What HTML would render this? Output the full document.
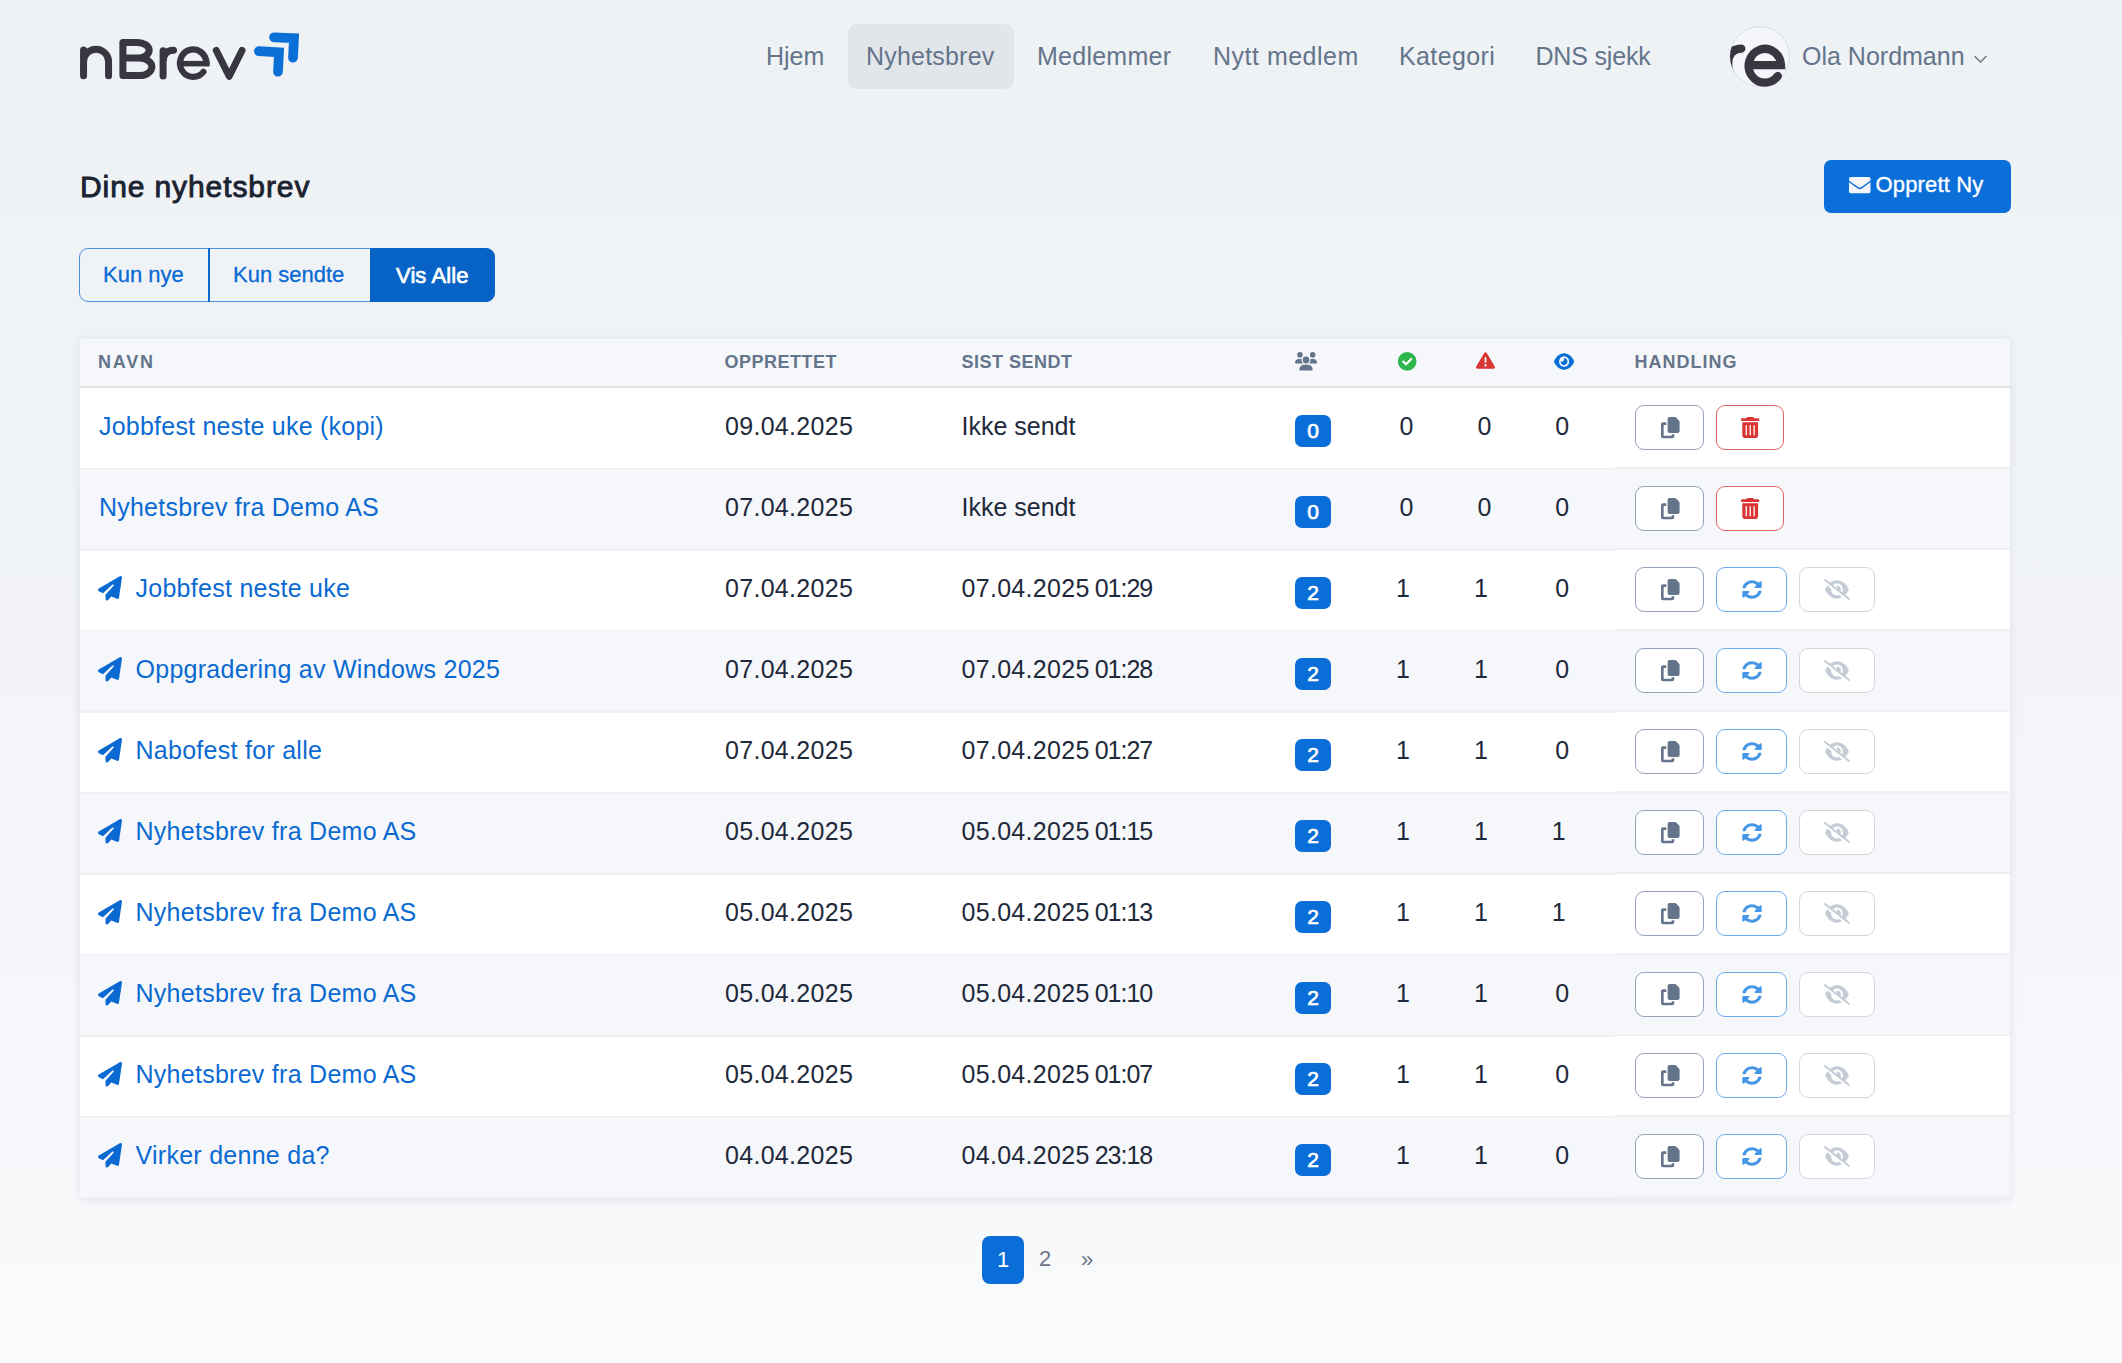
<!DOCTYPE html><html><head><meta charset="utf-8"><style>
html,body{margin:0;padding:0}
body{width:2122px;height:1363px;position:relative;overflow:hidden;background:linear-gradient(180deg,#eef2f5 0%,#f2f4f7 50%,#f9fafc 100%);font-family:"Liberation Sans",sans-serif}
.t{position:absolute;white-space:nowrap}
.b{position:absolute;box-sizing:border-box}
.ic{position:absolute;overflow:visible}
</style></head><body>
<svg style="position:absolute;left:0;top:0" width="320" height="100" viewBox="0 0 320 100">
<g fill="none" stroke="#373641" stroke-width="7" stroke-linecap="round">
<path d="M83.55,75.75 V50 M83.55,61.7 A12.5,12.5 0 0 1 108.55,61.7 V75.75"/>
<path d="M122.9,75.6 V42.5 H137.4 A11.75,7.8 0 0 1 137.4,58.1 H122.9 M137.4,58.1 H139.3 A12.6,8.75 0 0 1 139.3,75.6 H122.9 V42.5" stroke-linejoin="round"/>
<path d="M163.1,75.9 V50.7 M163.1,62 C163.1,54 167,50.3 173.5,50.3"/>
<path d="M206.4,63.05 A13.2,13.7 0 1 0 203.4,71.9" stroke-width="6.3"/>
<rect x="181" y="60.9" width="28.6" height="5.5" fill="#373641" stroke="none"/>
<path d="M216.3,50.5 L229.2,76.3 L242,50.5" stroke-linejoin="round"/>
</g>
<g fill="none" stroke="#0b6fd8" stroke-width="9.7" stroke-linecap="round" stroke-linejoin="miter"><path d="M274,37.3 L294,38.2 L293,57.7"/><path d="M258.9,51.2 L279,52.3 L278,71.7"/></g>
</svg>
<div class="b" style="left:848px;top:24px;width:166px;height:65px;background:#e2e6ea;border-radius:9px"></div>
<div class="t" style="left:766px;top:44.06px;font-size:25px;line-height:25px;color:#64748b;font-weight:400">Hjem</div>
<div class="t" style="left:866px;top:44.06px;font-size:25px;line-height:25px;color:#64748b;font-weight:400;letter-spacing:0.2px">Nyhetsbrev</div>
<div class="t" style="left:1037px;top:44.06px;font-size:25px;line-height:25px;color:#64748b;font-weight:400;letter-spacing:0.25px">Medlemmer</div>
<div class="t" style="left:1213px;top:44.06px;font-size:25px;line-height:25px;color:#64748b;font-weight:400;letter-spacing:0.5px">Nytt medlem</div>
<div class="t" style="left:1399px;top:44.06px;font-size:25px;line-height:25px;color:#64748b;font-weight:400;letter-spacing:0.38px">Kategori</div>
<div class="t" style="left:1535.5px;top:44.06px;font-size:25px;line-height:25px;color:#64748b;font-weight:400;letter-spacing:-0.18px">DNS sjekk</div>
<svg style="position:absolute;left:1720px;top:17px" width="80" height="80" viewBox="1720 17 80 80">
<defs><clipPath id="av"><circle cx="1759.8" cy="56.4" r="29.8"/></clipPath></defs>
<circle cx="1759.8" cy="56.4" r="29.8" fill="#f5f6fa" stroke="#d8dce4" stroke-width="1"/>
<g clip-path="url(#av)"><g transform="translate(1766,64.6) scale(1.25) translate(-193.25,-63.05)" fill="none" stroke="#373641" stroke-width="6.6" stroke-linecap="round"><path d="M163.1,75.9 V50.7 M163.1,62 C163.1,54 167,50.3 173.5,50.3"/></g></g>
<g transform="translate(1764.85,64.3) scale(1.25) translate(-193.25,-63.05)" fill="none" stroke="#373641" stroke-width="6.6" stroke-linecap="round"><path d="M180.3,63.7 H206.2 A12.95,13.55 0 1 0 203.6,72.4"/></g>
</svg>
<div class="t" style="left:1802px;top:44.06px;font-size:25px;line-height:25px;color:#64748b;font-weight:400">Ola Nordmann</div>
<svg class="ic" style="left:1973px;top:54px;width:15px;height:10px" viewBox="0 0 15 10"><path d="M1.5,2 L7.5,8 L13.5,2" fill="none" stroke="#6b7685" stroke-width="1.4"/></svg>
<div class="t" style="left:80px;top:171.97px;font-size:30px;line-height:30px;color:#1b2230;font-weight:400;letter-spacing:0.9px;-webkit-text-stroke:0.9px #1b2230">Dine nyhetsbrev</div>
<div class="b" style="left:1824px;top:160px;width:187px;height:53px;background:#0a6fd8;border-radius:7px"></div>
<svg class="ic" style="left:1849px;top:177.4px;width:21.5px;height:16.3px" viewBox="0 64 512 384" preserveAspectRatio="none"><path fill="#f4f6fb" d="M502.3 190.8c3.9-3.1 9.7-.2 9.7 4.7V400c0 26.5-21.5 48-48 48H48c-26.5 0-48-21.5-48-48V195.6c0-5 5.7-7.8 9.7-4.7 22.4 17.4 52.1 39.5 154.1 113.6 21.1 15.4 56.7 47.8 92.2 47.6 35.7.3 72-32.8 92.3-47.6 102-74.1 131.6-96.3 154-113.7zM256 320c23.2.4 56.6-29.2 73.4-41.4 132.7-96.3 142.8-104.7 173.4-128.7 5.8-4.5 9.2-11.5 9.2-18.9v-19c0-26.5-21.5-48-48-48H48C21.5 64 0 85.5 0 112v19c0 7.4 3.4 14.3 9.2 18.9 30.6 23.9 40.7 32.4 173.4 128.7 16.8 12.2 50.2 41.8 73.4 41.4z"/></svg>
<div class="t" style="left:1875.5px;top:174.22px;font-size:22px;line-height:22px;color:#ffffff;font-weight:400;letter-spacing:0.15px;-webkit-text-stroke:0.35px #ffffff">Opprett Ny</div>
<div class="b" style="left:79px;top:248px;width:416px;height:54px;border:1.7px solid #4b92e3;border-radius:9px"></div>
<div class="b" style="left:370px;top:248px;width:125px;height:54px;background:#0863c6;border-radius:0 9px 9px 0"></div>
<div class="b" style="left:208px;top:248px;width:2px;height:54px;background:#0a6ad4"></div>
<div class="t" style="left:103px;top:264.42px;font-size:22px;line-height:22px;color:#0a6ad4;font-weight:400;-webkit-text-stroke:0.3px #0a6ad4">Kun nye</div>
<div class="t" style="left:233px;top:264.42px;font-size:22px;line-height:22px;color:#0a6ad4;font-weight:400;-webkit-text-stroke:0.3px #0a6ad4">Kun sendte</div>
<div class="t" style="left:396px;top:264.92px;font-size:22px;line-height:22px;color:#ffffff;font-weight:400;letter-spacing:0.1px;-webkit-text-stroke:0.7px #ffffff">Vis Alle</div>
<div class="b" style="left:80px;top:339px;width:1930px;height:859px;background:#fff;box-shadow:0 2px 9px rgba(30,40,60,0.10)"></div>
<div class="b" style="left:80px;top:339px;width:1930px;height:47px;background:#f6f7fa"></div>
<div class="b" style="left:80px;top:386px;width:1930px;height:2px;background:#dfe3e8"></div>
<div class="t" style="left:98px;top:353.38px;font-size:18px;line-height:18px;color:#64748b;font-weight:700;letter-spacing:1.8px">NAVN</div>
<div class="t" style="left:724.5px;top:353.38px;font-size:18px;line-height:18px;color:#64748b;font-weight:700;letter-spacing:0.5px">OPPRETTET</div>
<div class="t" style="left:961.5px;top:353.38px;font-size:18px;line-height:18px;color:#64748b;font-weight:700;letter-spacing:0.5px">SIST SENDT</div>
<div class="t" style="left:1634.5px;top:353.38px;font-size:18px;line-height:18px;color:#64748b;font-weight:700;letter-spacing:1.0px">HANDLING</div>
<svg class="ic" style="left:1295.2px;top:352.2px;width:22.1px;height:18.4px" viewBox="0 0 640 512" preserveAspectRatio="none"><path fill="#64748b" d="M144 0a80 80 0 1 1 0 160A80 80 0 1 1 144 0zM512 0a80 80 0 1 1 0 160A80 80 0 1 1 512 0zM0 298.7C0 239.8 47.8 192 106.7 192h42.7c15.9 0 31 3.5 44.6 9.7c-1.3 7.2-1.9 14.7-1.900 22.3c0 38.200 16.800 72.500 43.300 96c-.2 0-.4 0-.7 0H21.3C9.6 320 0 310.4 0 298.7zM405.3 320c-.2 0-.4 0-.7 0c26.6-23.5 43.3-57.8 43.3-96c0-7.6-.7-15-1.9-22.3c13.6-6.3 28.7-9.7 44.6-9.7h42.7C592.2 192 640 239.8 640 298.7c0 11.8-9.6 21.3-21.3 21.3H405.3zM224 224a96 96 0 1 1 192 0 96 96 0 1 1 -192 0zM128 485.3C128 411.7 187.7 352 261.3 352H378.7C452.3 352 512 411.7 512 485.3c0 14.7-11.9 26.7-26.7 26.7H154.7c-14.7 0-26.7-11.9-26.7-26.7z"/></svg>
<svg class="ic" style="left:1397px;top:351px;width:21px;height:21px" viewBox="0 0 21 21"><circle cx="10.2" cy="10.4" r="9.3" fill="#2eb54b"/><path d="M6.2,10.6 L9,13.3 L14.2,7.9" fill="none" stroke="#fff" stroke-width="2.2" stroke-linecap="round" stroke-linejoin="round"/></svg>
<svg class="ic" style="left:1475.5px;top:351px;width:19px;height:19px" viewBox="0 0 512 512" preserveAspectRatio="none"><path fill="#d93636" d="M256 32c14.2 0 27.3 7.5 34.5 19.8l216 368c7.3 12.4 7.3 27.7 .2 40.1S486.3 480 472 480H40c-14.3 0-27.6-7.7-34.7-20.1s-7-27.8 .2-40.1l216-368C228.7 39.5 241.8 32 256 32zm0 128c-13.3 0-24 10.7-24 24V296c0 13.3 10.7 24 24 24s24-10.7 24-24V184c0-13.3-10.7-24-24-24zm32 224a32 32 0 1 0 -64 0 32 32 0 1 0 64 0z"/></svg>
<svg class="ic" style="left:1554.2px;top:352px;width:20.2px;height:19px" viewBox="0 0 576 512" preserveAspectRatio="none"><path fill="#0a6ed8" d="M288 32c-80.8 0-145.5 36.8-192.6 80.6C48.6 156 17.3 208 2.5 243.7c-3.3 7.9-3.3 16.7 0 24.6C17.3 304 48.6 356 95.4 399.4C142.5 443.2 207.2 480 288 480s145.5-36.8 192.6-80.6c46.8-43.5 78.1-95.4 93-131.1c3.3-7.900 3.3-16.700 0-24.6c-14.9-35.7-46.2-87.7-93-131.1C433.5 68.8 368.8 32 288 32zM144 256a144 144 0 1 1 288 0 144 144 0 1 1 -288 0zm144-64c0 35.3-28.7 64-64 64c-7.1 0-13.9-1.2-20.3-3.3c-5.5-1.8-11.9 1.6-11.7 7.4c.3 6.9 1.3 13.8 3.2 20.7c13.7 51.2 66.4 81.6 117.6 67.9s81.6-66.4 67.9-117.6c-11.1-41.5-47.8-69.4-88.6-71.1c-5.8-.2-9.2 6.1-7.4 11.7c2.1 6.4 3.3 13.2 3.3 20.3z"/></svg>
<div class="b" style="left:80px;top:468px;width:1535px;height:2px;background:#eef0f3"></div>
<div class="b" style="left:1615px;top:467px;width:395px;height:2px;background:#eef0f3"></div>
<div class="t" style="left:99px;top:414.26px;font-size:25px;line-height:25px;color:#0a6ad2;font-weight:400;letter-spacing:0.22px">Jobbfest neste uke (kopi)</div>
<div class="t" style="left:725px;top:414.26px;font-size:25px;line-height:25px;color:#1e293b;font-weight:400;letter-spacing:0.3px">09.04.2025</div>
<div class="t" style="left:961.5px;top:414.26px;font-size:25px;line-height:25px;color:#1e293b;font-weight:400">Ikke sendt</div>
<div class="b" style="left:1295px;top:414.6px;width:36px;height:32px;background:#0a6ed8;border-radius:7px"></div>
<div class="t" style="left:1295px;top:414.6px;width:36px;height:32px;line-height:32px;text-align:center;font-size:21px;font-weight:400;-webkit-text-stroke:0.7px #fff;color:#fff">0</div>
<div class="t" style="left:1399.5px;top:414.26px;font-size:25px;line-height:25px;color:#1e293b;font-weight:400">0</div>
<div class="t" style="left:1477.5px;top:414.26px;font-size:25px;line-height:25px;color:#1e293b;font-weight:400">0</div>
<div class="t" style="left:1555.3px;top:414.26px;font-size:25px;line-height:25px;color:#1e293b;font-weight:400">0</div>
<div class="b" style="left:1635px;top:405.2px;width:69px;height:45px;border:1.5px solid #94a3b8;border-radius:9px;background:#fff"></div>
<svg class="ic" style="left:1660.5px;top:417.0px;width:18.6px;height:21.3px" viewBox="0 0 448 512" preserveAspectRatio="none"><path fill="#64748b" d="M208 0H332.1c12.7 0 24.9 5.1 33.9 14.1l67.9 67.9c9 9 14.1 21.2 14.1 33.9V336c0 26.5-21.5 48-48 48H208c-26.5 0-48-21.5-48-48V48c0-26.5 21.5-48 48-48zM48 128h80v64H64V448H256V416h64v48c0 26.5-21.5 48-48 48H48c-26.5 0-48-21.5-48-48V176c0-26.5 21.5-48 48-48z"/></svg>
<div class="b" style="left:1716px;top:405.2px;width:68px;height:45px;border:1.5px solid #e06666;border-radius:9px;background:#fff"></div>
<svg class="ic" style="left:1741px;top:417.0px;width:18.4px;height:21px" viewBox="0 0 448 512" preserveAspectRatio="none"><path fill="#d93333" d="M135.2 17.7C140.6 6.8 151.7 0 163.8 0H284.2c12.1 0 23.2 6.8 28.6 17.7L320 32h96c17.7 0 32 14.3 32 32s-14.3 32-32 32H32C14.3 96 0 81.7 0 64S14.3 32 32 32h96l7.2-14.3zM32 128H416V448c0 35.3-28.7 64-64 64H96c-35.3 0-64-28.7-64-64V128zm96 64c-8.8 0-16 7.2-16 16V432c0 8.8 7.2 16 16 16s16-7.2 16-16V208c0-8.8-7.2-16-16-16zm96 0c-8.8 0-16 7.2-16 16V432c0 8.8 7.2 16 16 16s16-7.2 16-16V208c0-8.8-7.2-16-16-16zm96 0c-8.8 0-16 7.2-16 16V432c0 8.8 7.2 16 16 16s16-7.2 16-16V208c0-8.8-7.2-16-16-16z"/></svg>
<div class="b" style="left:80px;top:469px;width:1930px;height:80px;background:#f6f7fa"></div>
<div class="b" style="left:80px;top:549px;width:1535px;height:2px;background:#eef0f3"></div>
<div class="b" style="left:1615px;top:548px;width:395px;height:2px;background:#eef0f3"></div>
<div class="t" style="left:99px;top:495.26px;font-size:25px;line-height:25px;color:#0a6ad2;font-weight:400;letter-spacing:0.22px">Nyhetsbrev fra Demo AS</div>
<div class="t" style="left:725px;top:495.26px;font-size:25px;line-height:25px;color:#1e293b;font-weight:400;letter-spacing:0.3px">07.04.2025</div>
<div class="t" style="left:961.5px;top:495.26px;font-size:25px;line-height:25px;color:#1e293b;font-weight:400">Ikke sendt</div>
<div class="b" style="left:1295px;top:495.6px;width:36px;height:32px;background:#0a6ed8;border-radius:7px"></div>
<div class="t" style="left:1295px;top:495.6px;width:36px;height:32px;line-height:32px;text-align:center;font-size:21px;font-weight:400;-webkit-text-stroke:0.7px #fff;color:#fff">0</div>
<div class="t" style="left:1399.5px;top:495.26px;font-size:25px;line-height:25px;color:#1e293b;font-weight:400">0</div>
<div class="t" style="left:1477.5px;top:495.26px;font-size:25px;line-height:25px;color:#1e293b;font-weight:400">0</div>
<div class="t" style="left:1555.3px;top:495.26px;font-size:25px;line-height:25px;color:#1e293b;font-weight:400">0</div>
<div class="b" style="left:1635px;top:486.2px;width:69px;height:45px;border:1.5px solid #94a3b8;border-radius:9px;background:#fff"></div>
<svg class="ic" style="left:1660.5px;top:498.0px;width:18.6px;height:21.3px" viewBox="0 0 448 512" preserveAspectRatio="none"><path fill="#64748b" d="M208 0H332.1c12.7 0 24.9 5.1 33.9 14.1l67.9 67.9c9 9 14.1 21.2 14.1 33.9V336c0 26.5-21.5 48-48 48H208c-26.5 0-48-21.5-48-48V48c0-26.5 21.5-48 48-48zM48 128h80v64H64V448H256V416h64v48c0 26.5-21.5 48-48 48H48c-26.5 0-48-21.5-48-48V176c0-26.5 21.5-48 48-48z"/></svg>
<div class="b" style="left:1716px;top:486.2px;width:68px;height:45px;border:1.5px solid #e06666;border-radius:9px;background:#fff"></div>
<svg class="ic" style="left:1741px;top:498.0px;width:18.4px;height:21px" viewBox="0 0 448 512" preserveAspectRatio="none"><path fill="#d93333" d="M135.2 17.7C140.6 6.8 151.7 0 163.8 0H284.2c12.1 0 23.2 6.8 28.6 17.7L320 32h96c17.7 0 32 14.3 32 32s-14.3 32-32 32H32C14.3 96 0 81.7 0 64S14.3 32 32 32h96l7.2-14.3zM32 128H416V448c0 35.3-28.7 64-64 64H96c-35.3 0-64-28.7-64-64V128zm96 64c-8.8 0-16 7.2-16 16V432c0 8.8 7.2 16 16 16s16-7.2 16-16V208c0-8.8-7.2-16-16-16zm96 0c-8.8 0-16 7.2-16 16V432c0 8.8 7.2 16 16 16s16-7.2 16-16V208c0-8.8-7.2-16-16-16zm96 0c-8.8 0-16 7.2-16 16V432c0 8.8 7.2 16 16 16s16-7.2 16-16V208c0-8.8-7.2-16-16-16z"/></svg>
<div class="b" style="left:80px;top:630px;width:1535px;height:2px;background:#eef0f3"></div>
<div class="b" style="left:1615px;top:629px;width:395px;height:2px;background:#eef0f3"></div>
<svg class="ic" style="left:98px;top:576.3px;width:24px;height:24.5px" viewBox="0 0 512 512" preserveAspectRatio="none"><path fill="#0a6ad2" d="M498.1 5.6c10.1 7 15.4 19.1 13.5 31.2l-64 416c-1.5 9.7-7.4 18.2-16 23s-18.9 5.4-28 1.6L284 427.7l-68.5 74.1c-8.9 9.7-22.9 12.9-35.2 8.1S160 493.2 160 480V396.4c0-4 1.5-7.8 4.2-10.7L331.8 202.8c5.8-6.3 5.6-16-.4-22s-15.7-6.4-22-.7L106 360.8 17.7 316.6C7.1 311.3 .3 300.7 0 288.9s5.9-22.8 16.1-28.7l448-256c10.7-6.1 23.9-5.5 34 1.4z"/></svg>
<div class="t" style="left:135.5px;top:576.26px;font-size:25px;line-height:25px;color:#0a6ad2;font-weight:400;letter-spacing:0.27px">Jobbfest neste uke</div>
<div class="t" style="left:725px;top:576.26px;font-size:25px;line-height:25px;color:#1e293b;font-weight:400;letter-spacing:0.3px">07.04.2025</div>
<div class="t" style="left:961.5px;top:576.26px;font-size:25px;line-height:25px;color:#1e293b;font-weight:400"><span style="letter-spacing:0.3px">07.04.2025</span><span style="letter-spacing:-1px;margin-left:5px">01:29</span></div>
<div class="b" style="left:1295px;top:576.6px;width:36px;height:32px;background:#0a6ed8;border-radius:7px"></div>
<div class="t" style="left:1295px;top:576.6px;width:36px;height:32px;line-height:32px;text-align:center;font-size:21px;font-weight:400;-webkit-text-stroke:0.7px #fff;color:#fff">2</div>
<div class="t" style="left:1396.0px;top:576.26px;font-size:25px;line-height:25px;color:#1e293b;font-weight:400">1</div>
<div class="t" style="left:1474.0px;top:576.26px;font-size:25px;line-height:25px;color:#1e293b;font-weight:400">1</div>
<div class="t" style="left:1555.3px;top:576.26px;font-size:25px;line-height:25px;color:#1e293b;font-weight:400">0</div>
<div class="b" style="left:1635px;top:567.2px;width:69px;height:45px;border:1.5px solid #94a3b8;border-radius:9px;background:#fff"></div>
<svg class="ic" style="left:1660.5px;top:579.0px;width:18.6px;height:21.3px" viewBox="0 0 448 512" preserveAspectRatio="none"><path fill="#64748b" d="M208 0H332.1c12.7 0 24.9 5.1 33.9 14.1l67.9 67.9c9 9 14.1 21.2 14.1 33.9V336c0 26.5-21.5 48-48 48H208c-26.5 0-48-21.5-48-48V48c0-26.5 21.5-48 48-48zM48 128h80v64H64V448H256V416h64v48c0 26.5-21.5 48-48 48H48c-26.5 0-48-21.5-48-48V176c0-26.5 21.5-48 48-48z"/></svg>
<div class="b" style="left:1716px;top:567.2px;width:71px;height:45px;border:1.5px solid #6eabeb;border-radius:9px;background:#fff"></div>
<svg class="ic" style="left:1742px;top:580.0px;width:20px;height:19px" viewBox="0 0 512 512" preserveAspectRatio="none"><path fill="#4596e5" d="M370.72 133.28C339.458 104.008 298.888 87.962 255.848 88c-77.458.068-144.328 53.178-162.791 126.85-1.344 5.363-6.122 9.15-11.651 9.15H24.103c-7.498 0-13.194-6.807-11.807-14.176C33.933 94.924 134.813 8 256 8c66.448 0 126.791 26.136 171.315 68.685L463.03 40.97C478.149 25.851 504 36.559 504 57.941V192c0 13.255-10.745 24-24 24H345.941c-21.382 0-32.09-25.851-16.971-40.971l41.75-41.749zM32 296h134.059c21.382 0 32.09 25.851 16.971 40.971l-41.75 41.75c31.262 29.273 71.835 45.319 114.876 45.28 77.418-.07 144.315-53.144 162.787-126.849 1.344-5.363 6.122-9.15 11.651-9.15h57.304c7.498 0 13.194 6.807 11.807 14.176C478.067 417.076 377.187 504 256 504c-66.448 0-126.791-26.136-171.315-68.685L48.97 471.03C33.851 486.149 8 475.441 8 454.059V320c0-13.255 10.745-24 24-24z"/></svg>
<div class="b" style="left:1799px;top:567.2px;width:76px;height:45px;border:1.5px solid #d2d7de;border-radius:9px;background:#fff"></div>
<svg class="ic" style="left:1824px;top:578.5px;width:26px;height:21px" viewBox="0 0 640 512" preserveAspectRatio="none"><path fill="#c5ccd6" d="M38.8 5.1C28.4-3.1 13.3-1.2 5.1 9.2S-1.2 34.7 9.2 42.9l592 464c10.4 8.2 25.5 6.3 33.7-4.1s6.3-25.5-4.1-33.7L525.6 386.7c39.6-40.6 66.4-86.1 79.9-118.4c3.3-7.9 3.3-16.7 0-24.6c-14.9-35.7-46.2-87.7-93-131.1C465.5 68.8 400.8 32 320 32c-68.2 0-125 26.3-169.3 60.8L38.8 5.1zM223.1 149.5C248.6 126.2 282.7 112 320 112c79.5 0 144 64.5 144 144c0 24.9-6.3 48.3-17.4 68.7L408 294.5c8.4-19.3 10.6-41.4 4.8-63.3c-11.1-41.5-47.8-69.4-88.6-71.1c-5.8-.2-9.2 6.1-7.4 11.700c2.1 6.4 3.3 13.2 3.3 20.3c0 10.2-2.4 19.8-6.6 28.3l-90.3-70.8zM373 389.9c-16.4 6.5-34.3 10.1-53 10.1c-79.5 0-144-64.5-144-144c0-6.9 .5-13.6 1.4-20.2L83.1 161.5C60.3 191.2 44 220.8 34.5 243.7c-3.3 7.9-3.3 16.7 0 24.6c14.9 35.7 46.2 87.7 93 131.1C174.5 443.2 239.2 480 320 480c47.8 0 89.9-12.9 126.2-32.5L373 389.9z"/></svg>
<div class="b" style="left:80px;top:631px;width:1930px;height:80px;background:#f6f7fa"></div>
<div class="b" style="left:80px;top:711px;width:1535px;height:2px;background:#eef0f3"></div>
<div class="b" style="left:1615px;top:710px;width:395px;height:2px;background:#eef0f3"></div>
<svg class="ic" style="left:98px;top:657.3px;width:24px;height:24.5px" viewBox="0 0 512 512" preserveAspectRatio="none"><path fill="#0a6ad2" d="M498.1 5.6c10.1 7 15.4 19.1 13.5 31.2l-64 416c-1.5 9.7-7.4 18.2-16 23s-18.9 5.4-28 1.6L284 427.7l-68.5 74.1c-8.9 9.7-22.9 12.9-35.2 8.1S160 493.2 160 480V396.4c0-4 1.5-7.8 4.2-10.7L331.8 202.8c5.8-6.3 5.6-16-.4-22s-15.7-6.4-22-.7L106 360.8 17.7 316.6C7.1 311.3 .3 300.7 0 288.9s5.9-22.8 16.1-28.7l448-256c10.7-6.1 23.9-5.5 34 1.4z"/></svg>
<div class="t" style="left:135.5px;top:657.26px;font-size:25px;line-height:25px;color:#0a6ad2;font-weight:400;letter-spacing:0.27px">Oppgradering av Windows 2025</div>
<div class="t" style="left:725px;top:657.26px;font-size:25px;line-height:25px;color:#1e293b;font-weight:400;letter-spacing:0.3px">07.04.2025</div>
<div class="t" style="left:961.5px;top:657.26px;font-size:25px;line-height:25px;color:#1e293b;font-weight:400"><span style="letter-spacing:0.3px">07.04.2025</span><span style="letter-spacing:-1px;margin-left:5px">01:28</span></div>
<div class="b" style="left:1295px;top:657.6px;width:36px;height:32px;background:#0a6ed8;border-radius:7px"></div>
<div class="t" style="left:1295px;top:657.6px;width:36px;height:32px;line-height:32px;text-align:center;font-size:21px;font-weight:400;-webkit-text-stroke:0.7px #fff;color:#fff">2</div>
<div class="t" style="left:1396.0px;top:657.26px;font-size:25px;line-height:25px;color:#1e293b;font-weight:400">1</div>
<div class="t" style="left:1474.0px;top:657.26px;font-size:25px;line-height:25px;color:#1e293b;font-weight:400">1</div>
<div class="t" style="left:1555.3px;top:657.26px;font-size:25px;line-height:25px;color:#1e293b;font-weight:400">0</div>
<div class="b" style="left:1635px;top:648.2px;width:69px;height:45px;border:1.5px solid #94a3b8;border-radius:9px;background:#fff"></div>
<svg class="ic" style="left:1660.5px;top:660.0px;width:18.6px;height:21.3px" viewBox="0 0 448 512" preserveAspectRatio="none"><path fill="#64748b" d="M208 0H332.1c12.7 0 24.9 5.1 33.9 14.1l67.9 67.9c9 9 14.1 21.2 14.1 33.9V336c0 26.5-21.5 48-48 48H208c-26.5 0-48-21.5-48-48V48c0-26.5 21.5-48 48-48zM48 128h80v64H64V448H256V416h64v48c0 26.5-21.5 48-48 48H48c-26.5 0-48-21.5-48-48V176c0-26.5 21.5-48 48-48z"/></svg>
<div class="b" style="left:1716px;top:648.2px;width:71px;height:45px;border:1.5px solid #6eabeb;border-radius:9px;background:#fff"></div>
<svg class="ic" style="left:1742px;top:661.0px;width:20px;height:19px" viewBox="0 0 512 512" preserveAspectRatio="none"><path fill="#4596e5" d="M370.72 133.28C339.458 104.008 298.888 87.962 255.848 88c-77.458.068-144.328 53.178-162.791 126.85-1.344 5.363-6.122 9.15-11.651 9.15H24.103c-7.498 0-13.194-6.807-11.807-14.176C33.933 94.924 134.813 8 256 8c66.448 0 126.791 26.136 171.315 68.685L463.03 40.97C478.149 25.851 504 36.559 504 57.941V192c0 13.255-10.745 24-24 24H345.941c-21.382 0-32.09-25.851-16.971-40.971l41.75-41.749zM32 296h134.059c21.382 0 32.09 25.851 16.971 40.971l-41.75 41.75c31.262 29.273 71.835 45.319 114.876 45.28 77.418-.07 144.315-53.144 162.787-126.849 1.344-5.363 6.122-9.15 11.651-9.15h57.304c7.498 0 13.194 6.807 11.807 14.176C478.067 417.076 377.187 504 256 504c-66.448 0-126.791-26.136-171.315-68.685L48.97 471.03C33.851 486.149 8 475.441 8 454.059V320c0-13.255 10.745-24 24-24z"/></svg>
<div class="b" style="left:1799px;top:648.2px;width:76px;height:45px;border:1.5px solid #d2d7de;border-radius:9px;background:#fff"></div>
<svg class="ic" style="left:1824px;top:659.5px;width:26px;height:21px" viewBox="0 0 640 512" preserveAspectRatio="none"><path fill="#c5ccd6" d="M38.8 5.1C28.4-3.1 13.3-1.2 5.1 9.2S-1.2 34.7 9.2 42.9l592 464c10.4 8.2 25.5 6.3 33.7-4.1s6.3-25.5-4.1-33.7L525.6 386.7c39.6-40.6 66.4-86.1 79.9-118.4c3.3-7.9 3.3-16.7 0-24.6c-14.9-35.7-46.2-87.7-93-131.1C465.5 68.8 400.8 32 320 32c-68.2 0-125 26.3-169.3 60.8L38.8 5.1zM223.1 149.5C248.6 126.2 282.7 112 320 112c79.5 0 144 64.5 144 144c0 24.9-6.3 48.3-17.4 68.7L408 294.5c8.4-19.3 10.6-41.4 4.8-63.3c-11.1-41.5-47.8-69.4-88.6-71.1c-5.8-.2-9.2 6.1-7.4 11.700c2.1 6.4 3.3 13.2 3.3 20.3c0 10.2-2.4 19.8-6.6 28.3l-90.3-70.8zM373 389.9c-16.4 6.5-34.3 10.1-53 10.1c-79.5 0-144-64.5-144-144c0-6.9 .5-13.6 1.4-20.2L83.1 161.5C60.3 191.2 44 220.8 34.5 243.7c-3.3 7.9-3.3 16.7 0 24.6c14.9 35.7 46.2 87.7 93 131.1C174.5 443.2 239.2 480 320 480c47.8 0 89.9-12.9 126.2-32.5L373 389.9z"/></svg>
<div class="b" style="left:80px;top:792px;width:1535px;height:2px;background:#eef0f3"></div>
<div class="b" style="left:1615px;top:791px;width:395px;height:2px;background:#eef0f3"></div>
<svg class="ic" style="left:98px;top:738.3px;width:24px;height:24.5px" viewBox="0 0 512 512" preserveAspectRatio="none"><path fill="#0a6ad2" d="M498.1 5.6c10.1 7 15.4 19.1 13.5 31.2l-64 416c-1.5 9.7-7.4 18.2-16 23s-18.9 5.4-28 1.6L284 427.7l-68.5 74.1c-8.9 9.7-22.9 12.9-35.2 8.1S160 493.2 160 480V396.4c0-4 1.5-7.8 4.2-10.7L331.8 202.8c5.8-6.3 5.6-16-.4-22s-15.7-6.4-22-.7L106 360.8 17.7 316.6C7.1 311.3 .3 300.7 0 288.9s5.9-22.8 16.1-28.7l448-256c10.7-6.1 23.9-5.5 34 1.4z"/></svg>
<div class="t" style="left:135.5px;top:738.26px;font-size:25px;line-height:25px;color:#0a6ad2;font-weight:400;letter-spacing:0.27px">Nabofest for alle</div>
<div class="t" style="left:725px;top:738.26px;font-size:25px;line-height:25px;color:#1e293b;font-weight:400;letter-spacing:0.3px">07.04.2025</div>
<div class="t" style="left:961.5px;top:738.26px;font-size:25px;line-height:25px;color:#1e293b;font-weight:400"><span style="letter-spacing:0.3px">07.04.2025</span><span style="letter-spacing:-1px;margin-left:5px">01:27</span></div>
<div class="b" style="left:1295px;top:738.6px;width:36px;height:32px;background:#0a6ed8;border-radius:7px"></div>
<div class="t" style="left:1295px;top:738.6px;width:36px;height:32px;line-height:32px;text-align:center;font-size:21px;font-weight:400;-webkit-text-stroke:0.7px #fff;color:#fff">2</div>
<div class="t" style="left:1396.0px;top:738.26px;font-size:25px;line-height:25px;color:#1e293b;font-weight:400">1</div>
<div class="t" style="left:1474.0px;top:738.26px;font-size:25px;line-height:25px;color:#1e293b;font-weight:400">1</div>
<div class="t" style="left:1555.3px;top:738.26px;font-size:25px;line-height:25px;color:#1e293b;font-weight:400">0</div>
<div class="b" style="left:1635px;top:729.2px;width:69px;height:45px;border:1.5px solid #94a3b8;border-radius:9px;background:#fff"></div>
<svg class="ic" style="left:1660.5px;top:741.0px;width:18.6px;height:21.3px" viewBox="0 0 448 512" preserveAspectRatio="none"><path fill="#64748b" d="M208 0H332.1c12.7 0 24.9 5.1 33.9 14.1l67.9 67.9c9 9 14.1 21.2 14.1 33.9V336c0 26.5-21.5 48-48 48H208c-26.5 0-48-21.5-48-48V48c0-26.5 21.5-48 48-48zM48 128h80v64H64V448H256V416h64v48c0 26.5-21.5 48-48 48H48c-26.5 0-48-21.5-48-48V176c0-26.5 21.5-48 48-48z"/></svg>
<div class="b" style="left:1716px;top:729.2px;width:71px;height:45px;border:1.5px solid #6eabeb;border-radius:9px;background:#fff"></div>
<svg class="ic" style="left:1742px;top:742.0px;width:20px;height:19px" viewBox="0 0 512 512" preserveAspectRatio="none"><path fill="#4596e5" d="M370.72 133.28C339.458 104.008 298.888 87.962 255.848 88c-77.458.068-144.328 53.178-162.791 126.85-1.344 5.363-6.122 9.15-11.651 9.15H24.103c-7.498 0-13.194-6.807-11.807-14.176C33.933 94.924 134.813 8 256 8c66.448 0 126.791 26.136 171.315 68.685L463.03 40.97C478.149 25.851 504 36.559 504 57.941V192c0 13.255-10.745 24-24 24H345.941c-21.382 0-32.09-25.851-16.971-40.971l41.75-41.749zM32 296h134.059c21.382 0 32.09 25.851 16.971 40.971l-41.75 41.75c31.262 29.273 71.835 45.319 114.876 45.28 77.418-.07 144.315-53.144 162.787-126.849 1.344-5.363 6.122-9.15 11.651-9.15h57.304c7.498 0 13.194 6.807 11.807 14.176C478.067 417.076 377.187 504 256 504c-66.448 0-126.791-26.136-171.315-68.685L48.97 471.03C33.851 486.149 8 475.441 8 454.059V320c0-13.255 10.745-24 24-24z"/></svg>
<div class="b" style="left:1799px;top:729.2px;width:76px;height:45px;border:1.5px solid #d2d7de;border-radius:9px;background:#fff"></div>
<svg class="ic" style="left:1824px;top:740.5px;width:26px;height:21px" viewBox="0 0 640 512" preserveAspectRatio="none"><path fill="#c5ccd6" d="M38.8 5.1C28.4-3.1 13.3-1.2 5.1 9.2S-1.2 34.7 9.2 42.9l592 464c10.4 8.2 25.5 6.3 33.7-4.1s6.3-25.5-4.1-33.7L525.6 386.7c39.6-40.6 66.4-86.1 79.9-118.4c3.3-7.9 3.3-16.7 0-24.6c-14.9-35.7-46.2-87.7-93-131.1C465.5 68.8 400.8 32 320 32c-68.2 0-125 26.3-169.3 60.8L38.8 5.1zM223.1 149.5C248.6 126.2 282.7 112 320 112c79.5 0 144 64.5 144 144c0 24.9-6.3 48.3-17.4 68.7L408 294.5c8.4-19.3 10.6-41.4 4.8-63.3c-11.1-41.5-47.8-69.4-88.6-71.1c-5.8-.2-9.2 6.1-7.4 11.700c2.1 6.4 3.3 13.2 3.3 20.3c0 10.2-2.4 19.8-6.6 28.3l-90.3-70.8zM373 389.9c-16.4 6.5-34.3 10.1-53 10.1c-79.5 0-144-64.5-144-144c0-6.9 .5-13.6 1.4-20.2L83.1 161.5C60.3 191.2 44 220.8 34.5 243.7c-3.3 7.9-3.3 16.7 0 24.6c14.9 35.7 46.2 87.7 93 131.1C174.5 443.2 239.2 480 320 480c47.8 0 89.9-12.9 126.2-32.5L373 389.9z"/></svg>
<div class="b" style="left:80px;top:793px;width:1930px;height:80px;background:#f6f7fa"></div>
<div class="b" style="left:80px;top:873px;width:1535px;height:2px;background:#eef0f3"></div>
<div class="b" style="left:1615px;top:872px;width:395px;height:2px;background:#eef0f3"></div>
<svg class="ic" style="left:98px;top:819.3px;width:24px;height:24.5px" viewBox="0 0 512 512" preserveAspectRatio="none"><path fill="#0a6ad2" d="M498.1 5.6c10.1 7 15.4 19.1 13.5 31.2l-64 416c-1.5 9.7-7.4 18.2-16 23s-18.9 5.4-28 1.6L284 427.7l-68.5 74.1c-8.9 9.7-22.9 12.9-35.2 8.1S160 493.2 160 480V396.4c0-4 1.5-7.8 4.2-10.7L331.8 202.8c5.8-6.3 5.6-16-.4-22s-15.7-6.4-22-.7L106 360.8 17.7 316.6C7.1 311.3 .3 300.7 0 288.9s5.9-22.8 16.1-28.7l448-256c10.7-6.1 23.9-5.5 34 1.4z"/></svg>
<div class="t" style="left:135.5px;top:819.26px;font-size:25px;line-height:25px;color:#0a6ad2;font-weight:400;letter-spacing:0.27px">Nyhetsbrev fra Demo AS</div>
<div class="t" style="left:725px;top:819.26px;font-size:25px;line-height:25px;color:#1e293b;font-weight:400;letter-spacing:0.3px">05.04.2025</div>
<div class="t" style="left:961.5px;top:819.26px;font-size:25px;line-height:25px;color:#1e293b;font-weight:400"><span style="letter-spacing:0.3px">05.04.2025</span><span style="letter-spacing:-1px;margin-left:5px">01:15</span></div>
<div class="b" style="left:1295px;top:819.6px;width:36px;height:32px;background:#0a6ed8;border-radius:7px"></div>
<div class="t" style="left:1295px;top:819.6px;width:36px;height:32px;line-height:32px;text-align:center;font-size:21px;font-weight:400;-webkit-text-stroke:0.7px #fff;color:#fff">2</div>
<div class="t" style="left:1396.0px;top:819.26px;font-size:25px;line-height:25px;color:#1e293b;font-weight:400">1</div>
<div class="t" style="left:1474.0px;top:819.26px;font-size:25px;line-height:25px;color:#1e293b;font-weight:400">1</div>
<div class="t" style="left:1551.8px;top:819.26px;font-size:25px;line-height:25px;color:#1e293b;font-weight:400">1</div>
<div class="b" style="left:1635px;top:810.2px;width:69px;height:45px;border:1.5px solid #94a3b8;border-radius:9px;background:#fff"></div>
<svg class="ic" style="left:1660.5px;top:822.0px;width:18.6px;height:21.3px" viewBox="0 0 448 512" preserveAspectRatio="none"><path fill="#64748b" d="M208 0H332.1c12.7 0 24.9 5.1 33.9 14.1l67.9 67.9c9 9 14.1 21.2 14.1 33.9V336c0 26.5-21.5 48-48 48H208c-26.5 0-48-21.5-48-48V48c0-26.5 21.5-48 48-48zM48 128h80v64H64V448H256V416h64v48c0 26.5-21.5 48-48 48H48c-26.5 0-48-21.5-48-48V176c0-26.5 21.5-48 48-48z"/></svg>
<div class="b" style="left:1716px;top:810.2px;width:71px;height:45px;border:1.5px solid #6eabeb;border-radius:9px;background:#fff"></div>
<svg class="ic" style="left:1742px;top:823.0px;width:20px;height:19px" viewBox="0 0 512 512" preserveAspectRatio="none"><path fill="#4596e5" d="M370.72 133.28C339.458 104.008 298.888 87.962 255.848 88c-77.458.068-144.328 53.178-162.791 126.85-1.344 5.363-6.122 9.15-11.651 9.15H24.103c-7.498 0-13.194-6.807-11.807-14.176C33.933 94.924 134.813 8 256 8c66.448 0 126.791 26.136 171.315 68.685L463.03 40.97C478.149 25.851 504 36.559 504 57.941V192c0 13.255-10.745 24-24 24H345.941c-21.382 0-32.09-25.851-16.971-40.971l41.75-41.749zM32 296h134.059c21.382 0 32.09 25.851 16.971 40.971l-41.75 41.75c31.262 29.273 71.835 45.319 114.876 45.28 77.418-.07 144.315-53.144 162.787-126.849 1.344-5.363 6.122-9.15 11.651-9.15h57.304c7.498 0 13.194 6.807 11.807 14.176C478.067 417.076 377.187 504 256 504c-66.448 0-126.791-26.136-171.315-68.685L48.97 471.03C33.851 486.149 8 475.441 8 454.059V320c0-13.255 10.745-24 24-24z"/></svg>
<div class="b" style="left:1799px;top:810.2px;width:76px;height:45px;border:1.5px solid #d2d7de;border-radius:9px;background:#fff"></div>
<svg class="ic" style="left:1824px;top:821.5px;width:26px;height:21px" viewBox="0 0 640 512" preserveAspectRatio="none"><path fill="#c5ccd6" d="M38.8 5.1C28.4-3.1 13.3-1.2 5.1 9.2S-1.2 34.7 9.2 42.9l592 464c10.4 8.2 25.5 6.3 33.7-4.1s6.3-25.5-4.1-33.7L525.6 386.7c39.6-40.6 66.4-86.1 79.9-118.4c3.3-7.9 3.3-16.7 0-24.6c-14.9-35.7-46.2-87.7-93-131.1C465.5 68.8 400.8 32 320 32c-68.2 0-125 26.3-169.3 60.8L38.8 5.1zM223.1 149.5C248.6 126.2 282.7 112 320 112c79.5 0 144 64.5 144 144c0 24.9-6.3 48.3-17.4 68.7L408 294.5c8.4-19.3 10.6-41.4 4.8-63.3c-11.1-41.5-47.8-69.4-88.6-71.1c-5.8-.2-9.2 6.1-7.4 11.700c2.1 6.4 3.3 13.2 3.3 20.3c0 10.2-2.4 19.8-6.6 28.3l-90.3-70.8zM373 389.9c-16.4 6.5-34.3 10.1-53 10.1c-79.5 0-144-64.5-144-144c0-6.9 .5-13.6 1.4-20.2L83.1 161.5C60.3 191.2 44 220.8 34.5 243.7c-3.3 7.9-3.3 16.7 0 24.6c14.9 35.7 46.2 87.7 93 131.1C174.5 443.2 239.2 480 320 480c47.8 0 89.9-12.9 126.2-32.5L373 389.9z"/></svg>
<div class="b" style="left:80px;top:954px;width:1535px;height:2px;background:#eef0f3"></div>
<div class="b" style="left:1615px;top:953px;width:395px;height:2px;background:#eef0f3"></div>
<svg class="ic" style="left:98px;top:900.3px;width:24px;height:24.5px" viewBox="0 0 512 512" preserveAspectRatio="none"><path fill="#0a6ad2" d="M498.1 5.6c10.1 7 15.4 19.1 13.5 31.2l-64 416c-1.5 9.7-7.4 18.2-16 23s-18.9 5.4-28 1.6L284 427.7l-68.5 74.1c-8.9 9.7-22.9 12.9-35.2 8.1S160 493.2 160 480V396.4c0-4 1.5-7.8 4.2-10.7L331.8 202.8c5.8-6.3 5.6-16-.4-22s-15.7-6.4-22-.7L106 360.8 17.7 316.6C7.1 311.3 .3 300.7 0 288.9s5.9-22.8 16.1-28.7l448-256c10.7-6.1 23.9-5.5 34 1.4z"/></svg>
<div class="t" style="left:135.5px;top:900.26px;font-size:25px;line-height:25px;color:#0a6ad2;font-weight:400;letter-spacing:0.27px">Nyhetsbrev fra Demo AS</div>
<div class="t" style="left:725px;top:900.26px;font-size:25px;line-height:25px;color:#1e293b;font-weight:400;letter-spacing:0.3px">05.04.2025</div>
<div class="t" style="left:961.5px;top:900.26px;font-size:25px;line-height:25px;color:#1e293b;font-weight:400"><span style="letter-spacing:0.3px">05.04.2025</span><span style="letter-spacing:-1px;margin-left:5px">01:13</span></div>
<div class="b" style="left:1295px;top:900.6px;width:36px;height:32px;background:#0a6ed8;border-radius:7px"></div>
<div class="t" style="left:1295px;top:900.6px;width:36px;height:32px;line-height:32px;text-align:center;font-size:21px;font-weight:400;-webkit-text-stroke:0.7px #fff;color:#fff">2</div>
<div class="t" style="left:1396.0px;top:900.26px;font-size:25px;line-height:25px;color:#1e293b;font-weight:400">1</div>
<div class="t" style="left:1474.0px;top:900.26px;font-size:25px;line-height:25px;color:#1e293b;font-weight:400">1</div>
<div class="t" style="left:1551.8px;top:900.26px;font-size:25px;line-height:25px;color:#1e293b;font-weight:400">1</div>
<div class="b" style="left:1635px;top:891.2px;width:69px;height:45px;border:1.5px solid #94a3b8;border-radius:9px;background:#fff"></div>
<svg class="ic" style="left:1660.5px;top:903.0px;width:18.6px;height:21.3px" viewBox="0 0 448 512" preserveAspectRatio="none"><path fill="#64748b" d="M208 0H332.1c12.7 0 24.9 5.1 33.9 14.1l67.9 67.9c9 9 14.1 21.2 14.1 33.9V336c0 26.5-21.5 48-48 48H208c-26.5 0-48-21.5-48-48V48c0-26.5 21.5-48 48-48zM48 128h80v64H64V448H256V416h64v48c0 26.5-21.5 48-48 48H48c-26.5 0-48-21.5-48-48V176c0-26.5 21.5-48 48-48z"/></svg>
<div class="b" style="left:1716px;top:891.2px;width:71px;height:45px;border:1.5px solid #6eabeb;border-radius:9px;background:#fff"></div>
<svg class="ic" style="left:1742px;top:904.0px;width:20px;height:19px" viewBox="0 0 512 512" preserveAspectRatio="none"><path fill="#4596e5" d="M370.72 133.28C339.458 104.008 298.888 87.962 255.848 88c-77.458.068-144.328 53.178-162.791 126.85-1.344 5.363-6.122 9.15-11.651 9.15H24.103c-7.498 0-13.194-6.807-11.807-14.176C33.933 94.924 134.813 8 256 8c66.448 0 126.791 26.136 171.315 68.685L463.03 40.97C478.149 25.851 504 36.559 504 57.941V192c0 13.255-10.745 24-24 24H345.941c-21.382 0-32.09-25.851-16.971-40.971l41.75-41.749zM32 296h134.059c21.382 0 32.09 25.851 16.971 40.971l-41.75 41.75c31.262 29.273 71.835 45.319 114.876 45.28 77.418-.07 144.315-53.144 162.787-126.849 1.344-5.363 6.122-9.15 11.651-9.15h57.304c7.498 0 13.194 6.807 11.807 14.176C478.067 417.076 377.187 504 256 504c-66.448 0-126.791-26.136-171.315-68.685L48.97 471.03C33.851 486.149 8 475.441 8 454.059V320c0-13.255 10.745-24 24-24z"/></svg>
<div class="b" style="left:1799px;top:891.2px;width:76px;height:45px;border:1.5px solid #d2d7de;border-radius:9px;background:#fff"></div>
<svg class="ic" style="left:1824px;top:902.5px;width:26px;height:21px" viewBox="0 0 640 512" preserveAspectRatio="none"><path fill="#c5ccd6" d="M38.8 5.1C28.4-3.1 13.3-1.2 5.1 9.2S-1.2 34.7 9.2 42.9l592 464c10.4 8.2 25.5 6.3 33.7-4.1s6.3-25.5-4.1-33.7L525.6 386.7c39.6-40.6 66.4-86.1 79.9-118.4c3.3-7.9 3.3-16.7 0-24.6c-14.9-35.7-46.2-87.7-93-131.1C465.5 68.8 400.8 32 320 32c-68.2 0-125 26.3-169.3 60.8L38.8 5.1zM223.1 149.5C248.6 126.2 282.7 112 320 112c79.5 0 144 64.5 144 144c0 24.9-6.3 48.3-17.4 68.7L408 294.5c8.4-19.3 10.6-41.4 4.8-63.3c-11.1-41.5-47.8-69.4-88.6-71.1c-5.8-.2-9.2 6.1-7.4 11.700c2.1 6.4 3.3 13.2 3.3 20.3c0 10.2-2.4 19.8-6.6 28.3l-90.3-70.8zM373 389.9c-16.4 6.5-34.3 10.1-53 10.1c-79.5 0-144-64.5-144-144c0-6.9 .5-13.6 1.4-20.2L83.1 161.5C60.3 191.2 44 220.8 34.5 243.7c-3.3 7.9-3.3 16.7 0 24.6c14.9 35.7 46.2 87.7 93 131.1C174.5 443.2 239.2 480 320 480c47.8 0 89.9-12.9 126.2-32.5L373 389.9z"/></svg>
<div class="b" style="left:80px;top:955px;width:1930px;height:80px;background:#f6f7fa"></div>
<div class="b" style="left:80px;top:1035px;width:1535px;height:2px;background:#eef0f3"></div>
<div class="b" style="left:1615px;top:1034px;width:395px;height:2px;background:#eef0f3"></div>
<svg class="ic" style="left:98px;top:981.3px;width:24px;height:24.5px" viewBox="0 0 512 512" preserveAspectRatio="none"><path fill="#0a6ad2" d="M498.1 5.6c10.1 7 15.4 19.1 13.5 31.2l-64 416c-1.5 9.7-7.4 18.2-16 23s-18.9 5.4-28 1.6L284 427.7l-68.5 74.1c-8.9 9.7-22.9 12.9-35.2 8.1S160 493.2 160 480V396.4c0-4 1.5-7.8 4.2-10.7L331.8 202.8c5.8-6.3 5.6-16-.4-22s-15.7-6.4-22-.7L106 360.8 17.7 316.6C7.1 311.3 .3 300.7 0 288.9s5.9-22.8 16.1-28.7l448-256c10.7-6.1 23.9-5.5 34 1.4z"/></svg>
<div class="t" style="left:135.5px;top:981.26px;font-size:25px;line-height:25px;color:#0a6ad2;font-weight:400;letter-spacing:0.27px">Nyhetsbrev fra Demo AS</div>
<div class="t" style="left:725px;top:981.26px;font-size:25px;line-height:25px;color:#1e293b;font-weight:400;letter-spacing:0.3px">05.04.2025</div>
<div class="t" style="left:961.5px;top:981.26px;font-size:25px;line-height:25px;color:#1e293b;font-weight:400"><span style="letter-spacing:0.3px">05.04.2025</span><span style="letter-spacing:-1px;margin-left:5px">01:10</span></div>
<div class="b" style="left:1295px;top:981.6px;width:36px;height:32px;background:#0a6ed8;border-radius:7px"></div>
<div class="t" style="left:1295px;top:981.6px;width:36px;height:32px;line-height:32px;text-align:center;font-size:21px;font-weight:400;-webkit-text-stroke:0.7px #fff;color:#fff">2</div>
<div class="t" style="left:1396.0px;top:981.26px;font-size:25px;line-height:25px;color:#1e293b;font-weight:400">1</div>
<div class="t" style="left:1474.0px;top:981.26px;font-size:25px;line-height:25px;color:#1e293b;font-weight:400">1</div>
<div class="t" style="left:1555.3px;top:981.26px;font-size:25px;line-height:25px;color:#1e293b;font-weight:400">0</div>
<div class="b" style="left:1635px;top:972.2px;width:69px;height:45px;border:1.5px solid #94a3b8;border-radius:9px;background:#fff"></div>
<svg class="ic" style="left:1660.5px;top:984.0px;width:18.6px;height:21.3px" viewBox="0 0 448 512" preserveAspectRatio="none"><path fill="#64748b" d="M208 0H332.1c12.7 0 24.9 5.1 33.9 14.1l67.9 67.9c9 9 14.1 21.2 14.1 33.9V336c0 26.5-21.5 48-48 48H208c-26.5 0-48-21.5-48-48V48c0-26.5 21.5-48 48-48zM48 128h80v64H64V448H256V416h64v48c0 26.5-21.5 48-48 48H48c-26.5 0-48-21.5-48-48V176c0-26.5 21.5-48 48-48z"/></svg>
<div class="b" style="left:1716px;top:972.2px;width:71px;height:45px;border:1.5px solid #6eabeb;border-radius:9px;background:#fff"></div>
<svg class="ic" style="left:1742px;top:985.0px;width:20px;height:19px" viewBox="0 0 512 512" preserveAspectRatio="none"><path fill="#4596e5" d="M370.72 133.28C339.458 104.008 298.888 87.962 255.848 88c-77.458.068-144.328 53.178-162.791 126.85-1.344 5.363-6.122 9.15-11.651 9.15H24.103c-7.498 0-13.194-6.807-11.807-14.176C33.933 94.924 134.813 8 256 8c66.448 0 126.791 26.136 171.315 68.685L463.03 40.97C478.149 25.851 504 36.559 504 57.941V192c0 13.255-10.745 24-24 24H345.941c-21.382 0-32.09-25.851-16.971-40.971l41.75-41.749zM32 296h134.059c21.382 0 32.09 25.851 16.971 40.971l-41.75 41.75c31.262 29.273 71.835 45.319 114.876 45.28 77.418-.07 144.315-53.144 162.787-126.849 1.344-5.363 6.122-9.15 11.651-9.15h57.304c7.498 0 13.194 6.807 11.807 14.176C478.067 417.076 377.187 504 256 504c-66.448 0-126.791-26.136-171.315-68.685L48.97 471.03C33.851 486.149 8 475.441 8 454.059V320c0-13.255 10.745-24 24-24z"/></svg>
<div class="b" style="left:1799px;top:972.2px;width:76px;height:45px;border:1.5px solid #d2d7de;border-radius:9px;background:#fff"></div>
<svg class="ic" style="left:1824px;top:983.5px;width:26px;height:21px" viewBox="0 0 640 512" preserveAspectRatio="none"><path fill="#c5ccd6" d="M38.8 5.1C28.4-3.1 13.3-1.2 5.1 9.2S-1.2 34.7 9.2 42.9l592 464c10.4 8.2 25.5 6.3 33.7-4.1s6.3-25.5-4.1-33.7L525.6 386.7c39.6-40.6 66.4-86.1 79.9-118.4c3.3-7.9 3.3-16.7 0-24.6c-14.9-35.7-46.2-87.7-93-131.1C465.5 68.8 400.8 32 320 32c-68.2 0-125 26.3-169.3 60.8L38.8 5.1zM223.1 149.5C248.6 126.2 282.7 112 320 112c79.5 0 144 64.5 144 144c0 24.9-6.3 48.3-17.4 68.7L408 294.5c8.4-19.3 10.6-41.4 4.8-63.3c-11.1-41.5-47.8-69.4-88.6-71.1c-5.8-.2-9.2 6.1-7.4 11.700c2.1 6.4 3.3 13.2 3.3 20.3c0 10.2-2.4 19.8-6.6 28.3l-90.3-70.8zM373 389.9c-16.4 6.5-34.3 10.1-53 10.1c-79.5 0-144-64.5-144-144c0-6.9 .5-13.6 1.4-20.2L83.1 161.5C60.3 191.2 44 220.8 34.5 243.7c-3.3 7.9-3.3 16.7 0 24.6c14.9 35.7 46.2 87.7 93 131.1C174.5 443.2 239.2 480 320 480c47.8 0 89.9-12.9 126.2-32.5L373 389.9z"/></svg>
<div class="b" style="left:80px;top:1116px;width:1535px;height:2px;background:#eef0f3"></div>
<div class="b" style="left:1615px;top:1115px;width:395px;height:2px;background:#eef0f3"></div>
<svg class="ic" style="left:98px;top:1062.3px;width:24px;height:24.5px" viewBox="0 0 512 512" preserveAspectRatio="none"><path fill="#0a6ad2" d="M498.1 5.6c10.1 7 15.4 19.1 13.5 31.2l-64 416c-1.5 9.7-7.4 18.2-16 23s-18.9 5.4-28 1.6L284 427.7l-68.5 74.1c-8.9 9.7-22.9 12.9-35.2 8.1S160 493.2 160 480V396.4c0-4 1.5-7.8 4.2-10.7L331.8 202.8c5.8-6.3 5.6-16-.4-22s-15.7-6.4-22-.7L106 360.8 17.7 316.6C7.1 311.3 .3 300.7 0 288.9s5.9-22.8 16.1-28.7l448-256c10.7-6.1 23.9-5.5 34 1.4z"/></svg>
<div class="t" style="left:135.5px;top:1062.26px;font-size:25px;line-height:25px;color:#0a6ad2;font-weight:400;letter-spacing:0.27px">Nyhetsbrev fra Demo AS</div>
<div class="t" style="left:725px;top:1062.26px;font-size:25px;line-height:25px;color:#1e293b;font-weight:400;letter-spacing:0.3px">05.04.2025</div>
<div class="t" style="left:961.5px;top:1062.26px;font-size:25px;line-height:25px;color:#1e293b;font-weight:400"><span style="letter-spacing:0.3px">05.04.2025</span><span style="letter-spacing:-1px;margin-left:5px">01:07</span></div>
<div class="b" style="left:1295px;top:1062.6px;width:36px;height:32px;background:#0a6ed8;border-radius:7px"></div>
<div class="t" style="left:1295px;top:1062.6px;width:36px;height:32px;line-height:32px;text-align:center;font-size:21px;font-weight:400;-webkit-text-stroke:0.7px #fff;color:#fff">2</div>
<div class="t" style="left:1396.0px;top:1062.26px;font-size:25px;line-height:25px;color:#1e293b;font-weight:400">1</div>
<div class="t" style="left:1474.0px;top:1062.26px;font-size:25px;line-height:25px;color:#1e293b;font-weight:400">1</div>
<div class="t" style="left:1555.3px;top:1062.26px;font-size:25px;line-height:25px;color:#1e293b;font-weight:400">0</div>
<div class="b" style="left:1635px;top:1053.2px;width:69px;height:45px;border:1.5px solid #94a3b8;border-radius:9px;background:#fff"></div>
<svg class="ic" style="left:1660.5px;top:1065.0px;width:18.6px;height:21.3px" viewBox="0 0 448 512" preserveAspectRatio="none"><path fill="#64748b" d="M208 0H332.1c12.7 0 24.9 5.1 33.9 14.1l67.9 67.9c9 9 14.1 21.2 14.1 33.9V336c0 26.5-21.5 48-48 48H208c-26.5 0-48-21.5-48-48V48c0-26.5 21.5-48 48-48zM48 128h80v64H64V448H256V416h64v48c0 26.5-21.5 48-48 48H48c-26.5 0-48-21.5-48-48V176c0-26.5 21.5-48 48-48z"/></svg>
<div class="b" style="left:1716px;top:1053.2px;width:71px;height:45px;border:1.5px solid #6eabeb;border-radius:9px;background:#fff"></div>
<svg class="ic" style="left:1742px;top:1066.0px;width:20px;height:19px" viewBox="0 0 512 512" preserveAspectRatio="none"><path fill="#4596e5" d="M370.72 133.28C339.458 104.008 298.888 87.962 255.848 88c-77.458.068-144.328 53.178-162.791 126.85-1.344 5.363-6.122 9.15-11.651 9.15H24.103c-7.498 0-13.194-6.807-11.807-14.176C33.933 94.924 134.813 8 256 8c66.448 0 126.791 26.136 171.315 68.685L463.03 40.97C478.149 25.851 504 36.559 504 57.941V192c0 13.255-10.745 24-24 24H345.941c-21.382 0-32.09-25.851-16.971-40.971l41.75-41.749zM32 296h134.059c21.382 0 32.09 25.851 16.971 40.971l-41.75 41.75c31.262 29.273 71.835 45.319 114.876 45.28 77.418-.07 144.315-53.144 162.787-126.849 1.344-5.363 6.122-9.15 11.651-9.15h57.304c7.498 0 13.194 6.807 11.807 14.176C478.067 417.076 377.187 504 256 504c-66.448 0-126.791-26.136-171.315-68.685L48.97 471.03C33.851 486.149 8 475.441 8 454.059V320c0-13.255 10.745-24 24-24z"/></svg>
<div class="b" style="left:1799px;top:1053.2px;width:76px;height:45px;border:1.5px solid #d2d7de;border-radius:9px;background:#fff"></div>
<svg class="ic" style="left:1824px;top:1064.5px;width:26px;height:21px" viewBox="0 0 640 512" preserveAspectRatio="none"><path fill="#c5ccd6" d="M38.8 5.1C28.4-3.1 13.3-1.2 5.1 9.2S-1.2 34.7 9.2 42.9l592 464c10.4 8.2 25.5 6.3 33.7-4.1s6.3-25.5-4.1-33.7L525.6 386.7c39.6-40.6 66.4-86.1 79.9-118.4c3.3-7.9 3.3-16.7 0-24.6c-14.9-35.7-46.2-87.7-93-131.1C465.5 68.8 400.8 32 320 32c-68.2 0-125 26.3-169.3 60.8L38.8 5.1zM223.1 149.5C248.6 126.2 282.7 112 320 112c79.5 0 144 64.5 144 144c0 24.9-6.3 48.3-17.4 68.7L408 294.5c8.4-19.3 10.6-41.4 4.8-63.3c-11.1-41.5-47.8-69.4-88.6-71.1c-5.8-.2-9.2 6.1-7.4 11.700c2.1 6.4 3.3 13.2 3.3 20.3c0 10.2-2.4 19.8-6.6 28.3l-90.3-70.8zM373 389.9c-16.4 6.5-34.3 10.1-53 10.1c-79.5 0-144-64.5-144-144c0-6.9 .5-13.6 1.4-20.2L83.1 161.5C60.3 191.2 44 220.8 34.5 243.7c-3.3 7.9-3.3 16.7 0 24.6c14.9 35.7 46.2 87.7 93 131.1C174.5 443.2 239.2 480 320 480c47.8 0 89.9-12.9 126.2-32.5L373 389.9z"/></svg>
<div class="b" style="left:80px;top:1117px;width:1930px;height:80px;background:#f6f7fa"></div>
<div class="b" style="left:80px;top:1197px;width:1535px;height:2px;background:#eef0f3"></div>
<div class="b" style="left:1615px;top:1196px;width:395px;height:2px;background:#eef0f3"></div>
<svg class="ic" style="left:98px;top:1143.3px;width:24px;height:24.5px" viewBox="0 0 512 512" preserveAspectRatio="none"><path fill="#0a6ad2" d="M498.1 5.6c10.1 7 15.4 19.1 13.5 31.2l-64 416c-1.5 9.7-7.4 18.2-16 23s-18.9 5.4-28 1.6L284 427.7l-68.5 74.1c-8.9 9.7-22.9 12.9-35.2 8.1S160 493.2 160 480V396.4c0-4 1.5-7.8 4.2-10.7L331.8 202.8c5.8-6.3 5.6-16-.4-22s-15.7-6.4-22-.7L106 360.8 17.7 316.6C7.1 311.3 .3 300.7 0 288.9s5.9-22.8 16.1-28.7l448-256c10.7-6.1 23.9-5.5 34 1.4z"/></svg>
<div class="t" style="left:135.5px;top:1143.26px;font-size:25px;line-height:25px;color:#0a6ad2;font-weight:400;letter-spacing:0.27px">Virker denne da?</div>
<div class="t" style="left:725px;top:1143.26px;font-size:25px;line-height:25px;color:#1e293b;font-weight:400;letter-spacing:0.3px">04.04.2025</div>
<div class="t" style="left:961.5px;top:1143.26px;font-size:25px;line-height:25px;color:#1e293b;font-weight:400"><span style="letter-spacing:0.3px">04.04.2025</span><span style="letter-spacing:-1px;margin-left:5px">23:18</span></div>
<div class="b" style="left:1295px;top:1143.6px;width:36px;height:32px;background:#0a6ed8;border-radius:7px"></div>
<div class="t" style="left:1295px;top:1143.6px;width:36px;height:32px;line-height:32px;text-align:center;font-size:21px;font-weight:400;-webkit-text-stroke:0.7px #fff;color:#fff">2</div>
<div class="t" style="left:1396.0px;top:1143.26px;font-size:25px;line-height:25px;color:#1e293b;font-weight:400">1</div>
<div class="t" style="left:1474.0px;top:1143.26px;font-size:25px;line-height:25px;color:#1e293b;font-weight:400">1</div>
<div class="t" style="left:1555.3px;top:1143.26px;font-size:25px;line-height:25px;color:#1e293b;font-weight:400">0</div>
<div class="b" style="left:1635px;top:1134.2px;width:69px;height:45px;border:1.5px solid #94a3b8;border-radius:9px;background:#fff"></div>
<svg class="ic" style="left:1660.5px;top:1146.0px;width:18.6px;height:21.3px" viewBox="0 0 448 512" preserveAspectRatio="none"><path fill="#64748b" d="M208 0H332.1c12.7 0 24.9 5.1 33.9 14.1l67.9 67.9c9 9 14.1 21.2 14.1 33.9V336c0 26.5-21.5 48-48 48H208c-26.5 0-48-21.5-48-48V48c0-26.5 21.5-48 48-48zM48 128h80v64H64V448H256V416h64v48c0 26.5-21.5 48-48 48H48c-26.5 0-48-21.5-48-48V176c0-26.5 21.5-48 48-48z"/></svg>
<div class="b" style="left:1716px;top:1134.2px;width:71px;height:45px;border:1.5px solid #6eabeb;border-radius:9px;background:#fff"></div>
<svg class="ic" style="left:1742px;top:1147.0px;width:20px;height:19px" viewBox="0 0 512 512" preserveAspectRatio="none"><path fill="#4596e5" d="M370.72 133.28C339.458 104.008 298.888 87.962 255.848 88c-77.458.068-144.328 53.178-162.791 126.85-1.344 5.363-6.122 9.15-11.651 9.15H24.103c-7.498 0-13.194-6.807-11.807-14.176C33.933 94.924 134.813 8 256 8c66.448 0 126.791 26.136 171.315 68.685L463.03 40.97C478.149 25.851 504 36.559 504 57.941V192c0 13.255-10.745 24-24 24H345.941c-21.382 0-32.09-25.851-16.971-40.971l41.75-41.749zM32 296h134.059c21.382 0 32.09 25.851 16.971 40.971l-41.75 41.75c31.262 29.273 71.835 45.319 114.876 45.28 77.418-.07 144.315-53.144 162.787-126.849 1.344-5.363 6.122-9.15 11.651-9.15h57.304c7.498 0 13.194 6.807 11.807 14.176C478.067 417.076 377.187 504 256 504c-66.448 0-126.791-26.136-171.315-68.685L48.97 471.03C33.851 486.149 8 475.441 8 454.059V320c0-13.255 10.745-24 24-24z"/></svg>
<div class="b" style="left:1799px;top:1134.2px;width:76px;height:45px;border:1.5px solid #d2d7de;border-radius:9px;background:#fff"></div>
<svg class="ic" style="left:1824px;top:1145.5px;width:26px;height:21px" viewBox="0 0 640 512" preserveAspectRatio="none"><path fill="#c5ccd6" d="M38.8 5.1C28.4-3.1 13.3-1.2 5.1 9.2S-1.2 34.7 9.2 42.9l592 464c10.4 8.2 25.5 6.3 33.7-4.1s6.3-25.5-4.1-33.7L525.6 386.7c39.6-40.6 66.4-86.1 79.9-118.4c3.3-7.9 3.3-16.7 0-24.6c-14.9-35.7-46.2-87.7-93-131.1C465.5 68.8 400.8 32 320 32c-68.2 0-125 26.3-169.3 60.8L38.8 5.1zM223.1 149.5C248.6 126.2 282.7 112 320 112c79.5 0 144 64.5 144 144c0 24.9-6.3 48.3-17.4 68.7L408 294.5c8.4-19.3 10.6-41.4 4.8-63.3c-11.1-41.5-47.8-69.4-88.6-71.1c-5.8-.2-9.2 6.1-7.4 11.700c2.1 6.4 3.3 13.2 3.3 20.3c0 10.2-2.4 19.8-6.6 28.3l-90.3-70.8zM373 389.9c-16.4 6.5-34.3 10.1-53 10.1c-79.5 0-144-64.5-144-144c0-6.9 .5-13.6 1.4-20.2L83.1 161.5C60.3 191.2 44 220.8 34.5 243.7c-3.3 7.9-3.3 16.7 0 24.6c14.9 35.7 46.2 87.7 93 131.1C174.5 443.2 239.2 480 320 480c47.8 0 89.9-12.9 126.2-32.5L373 389.9z"/></svg>
<div class="b" style="left:982px;top:1235.5px;width:42px;height:48px;background:#0a6ed8;border-radius:8px"></div>
<div class="t" style="left:982px;top:1235.5px;width:42px;height:48px;line-height:48px;text-align:center;font-size:22px;color:#fff">1</div>
<div class="t" style="left:1039px;top:1248.41px;font-size:22px;line-height:22px;color:#6b7685;font-weight:400">2</div>
<div class="t" style="left:1081px;top:1248.91px;font-size:22px;line-height:22px;color:#6b7685;font-weight:400">&raquo;</div>
</body></html>
